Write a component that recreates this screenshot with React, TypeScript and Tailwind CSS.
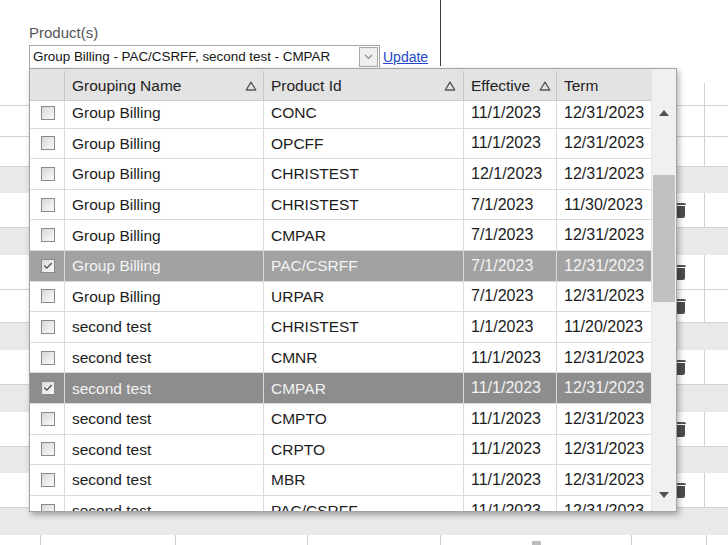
import { Check } from 'lucide-react';

type Row = {
  group: string;
  product: string;
  effective: string;
  term: string;
  checked?: boolean;
  tone?: 'selected' | 'hover';
};

const rows: Row[] = [
  { group: 'Group Billing', product: 'CONC', effective: '11/1/2023', term: '12/31/2023' },
  { group: 'Group Billing', product: 'OPCFF', effective: '11/1/2023', term: '12/31/2023' },
  { group: 'Group Billing', product: 'CHRISTEST', effective: '12/1/2023', term: '12/31/2023' },
  { group: 'Group Billing', product: 'CHRISTEST', effective: '7/1/2023', term: '11/30/2023' },
  { group: 'Group Billing', product: 'CMPAR', effective: '7/1/2023', term: '12/31/2023' },
  { group: 'Group Billing', product: 'PAC/CSRFF', effective: '7/1/2023', term: '12/31/2023', checked: true, tone: 'selected' },
  { group: 'Group Billing', product: 'URPAR', effective: '7/1/2023', term: '12/31/2023' },
  { group: 'second test', product: 'CHRISTEST', effective: '1/1/2023', term: '11/20/2023' },
  { group: 'second test', product: 'CMNR', effective: '11/1/2023', term: '12/31/2023' },
  { group: 'second test', product: 'CMPAR', effective: '11/1/2023', term: '12/31/2023', checked: true, tone: 'hover' },
  { group: 'second test', product: 'CMPTO', effective: '11/1/2023', term: '12/31/2023' },
  { group: 'second test', product: 'CRPTO', effective: '11/1/2023', term: '12/31/2023' },
  { group: 'second test', product: 'MBR', effective: '11/1/2023', term: '12/31/2023' },
  { group: 'second test', product: 'PAC/CSRFF', effective: '11/1/2023', term: '12/31/2023' },
];

// background grid rows behind the popup
const bgRows: { h: string; gray?: boolean; icon?: boolean }[] = [
  { h: 'h-[23px]' },
  { h: 'h-[31px]' },
  { h: 'h-[30px]' },
  { h: 'h-[26px]', gray: true },
  { h: 'h-[35px]', icon: true },
  { h: 'h-[27px]', gray: true },
  { h: 'h-[35px]', icon: true },
  { h: 'h-[33px]', icon: true },
  { h: 'h-[27px]', gray: true },
  { h: 'h-[35px]', icon: true },
  { h: 'h-[27px]', gray: true },
  { h: 'h-[35px]', icon: true },
  { h: 'h-[26px]', gray: true },
  { h: 'h-[35px]', icon: true },
  { h: 'h-[27px]', gray: true },
];

function SortIcon() {
  return (
    <svg width="12" height="10" viewBox="0 0 12 10">
      <path d="M6 1.2 L10.8 9 H1.2 Z" fill="none" stroke="#5a5a5a" strokeWidth="1.4" strokeLinejoin="round" />
    </svg>
  );
}

function CheckBox({ checked }: { checked?: boolean }) {
  return (
    <span className="flex h-[14px] w-[14px] items-center justify-center border border-[#8a8a8a] bg-linear-to-br from-[#d8d8d8] to-[#fbfbfb]">
      {checked && <Check className="h-[10px] w-[10px] text-[#4a4a4a]" strokeWidth={3} />}
    </span>
  );
}

function TrashStub() {
  return (
    <div className="flex flex-col items-center">
      <div className="h-[2px] w-[13px] rounded-t-sm bg-[#555]" />
      <div className="mt-[1px] h-[12px] w-[11px] rounded-b-[2px] bg-[#4d4d4d]" />
    </div>
  );
}

export default function App() {
  return (
    <div className="relative h-[545px] w-[728px] overflow-hidden bg-white font-['Liberation_Sans',Arial,sans-serif]">
      {/* form header */}
      <div className="flex h-[83px]">
        <div className="h-[66px] w-[441px] border-r-[1.5px] border-[#3c3c3c] pl-[29px] pt-[24px]">
          <div className="text-[15px] leading-[18px] text-[#555]">Product(s)</div>
          <div className="mt-[3px] flex items-center">
            <div className="flex h-[24px] w-[351px] items-center border border-[#a6a6a6] bg-white pl-[3px]">
              <span className="flex-1 truncate pt-[1px] text-[13.4px] text-[#141414]">
                Group Billing - PAC/CSRFF, second test - CMPAR
              </span>
              <span className="mr-[1px] flex h-[20px] w-[19px] items-center justify-center border border-[#a8a8a8] bg-[#efefef]">
                <svg width="9" height="6" viewBox="0 0 9 6">
                  <path d="M1 1 L4.5 4.5 L8 1" fill="none" stroke="#8a8a8a" strokeWidth="1.2" />
                </svg>
              </span>
            </div>
            <a className="ml-[3px] pt-[1px] text-[14px] text-[#2447c9] underline">Update</a>
          </div>
        </div>
      </div>

      {/* background grid */}
      <div className="w-[440px] border-t-2 border-[#555]" />
      <div className="-mt-[2px]">
        {bgRows.map((r, i) => (
          <div
            key={i}
            className={`flex ${r.h} items-center border-b ${
              r.gray ? 'border-[#e9e9e9] bg-[#e9e9e9]' : 'border-[#d2d2d2] bg-white'
            }`}
          >
            <div className="w-[672px]" />
            <div className="flex w-[14px] justify-center">{r.icon && <TrashStub />}</div>
            <div className="w-[18px]" />
            {!r.gray && <div className="h-full border-l border-[#d2d2d2]" />}
          </div>
        ))}
        <div className="flex h-[12px]">
          <div className="w-[41px] border-r border-[#cfcfcf]" />
          <div className="w-[135px] border-r border-[#cfcfcf]" />
          <div className="w-[132px] border-r border-[#cfcfcf]" />
          <div className="w-[133px] border-r border-[#cfcfcf]" />
          <div className="flex w-[191px] justify-center border-r border-[#cfcfcf]">
            <div className="mt-[6px] h-[6px] w-[9px] bg-[#bdbdbd]" />
          </div>
          <div className="w-[75px] border-r border-[#cfcfcf]" />
        </div>
      </div>

      {/* dropdown popup */}
      <div className="absolute left-[29px] top-[68px] flex h-[444px] w-[648px] border border-[#a3a3a3] bg-white shadow-[2px_3px_6px_rgba(0,0,0,0.3)]">
        <div className="flex w-[621px] flex-col">
          <div className="flex h-[32px] shrink-0 border-b border-[#cdcdcd] bg-[#e3e3e3] pt-[2px] text-[15.5px] text-[#222]">
            <div className="w-[35px] border-r border-[#c6c6c6]" />
            <div className="flex w-[199px] items-center justify-between border-r border-[#c6c6c6] pl-[7px] pr-[6px]">
              <span>Grouping Name</span>
              <SortIcon />
            </div>
            <div className="flex w-[200px] items-center justify-between border-r border-[#c6c6c6] pl-[7px] pr-[7px]">
              <span>Product Id</span>
              <SortIcon />
            </div>
            <div className="flex w-[93px] items-center justify-between border-r border-[#c6c6c6] pl-[7px] pr-[5px]">
              <span>Effective</span>
              <SortIcon />
            </div>
            <div className="flex w-[94px] items-center pl-[7px]">
              <span>Term</span>
            </div>
          </div>
          <div className="flex-1 overflow-hidden">
            <div className="-mt-[3px]">
              {rows.map((r, i) => {
                const bg =
                  r.tone === 'selected'
                    ? 'bg-[#a2a2a2] text-[#f4f4f4]'
                    : r.tone === 'hover'
                      ? 'bg-[#8d8d8d] text-[#f2f2f2]'
                      : 'bg-white text-[#1c1c1c]';
                return (
                  <div key={i} className={`flex h-[30.6px] border-b border-[#dadada] text-[15.5px] ${bg}`}>
                    <div className="flex w-[35px] items-center justify-center border-r border-[#dadada] pl-[1px]">
                      <CheckBox checked={r.checked} />
                    </div>
                    <div className="flex w-[199px] items-center border-r border-[#dadada] pl-[7px]">{r.group}</div>
                    <div className="flex w-[200px] items-center border-r border-[#dadada] pl-[7px]">{r.product}</div>
                    <div className="flex w-[93px] items-center border-r border-[#dadada] pl-[7px] text-[16px]">
                      {r.effective}
                    </div>
                    <div className="flex w-[94px] items-center pl-[7px] text-[16px]">{r.term}</div>
                  </div>
                );
              })}
            </div>
          </div>
        </div>

        {/* scrollbar */}
        <div className="flex w-[25px] flex-col border-l border-[#e6e6e6] bg-[#f0f0f0]">
          <div className="h-[32px]" />
          <div className="flex h-[24px] items-center justify-center">
            <svg width="10" height="6" viewBox="0 0 10 6">
              <path d="M5 0 L10 6 H0 Z" fill="#505050" />
            </svg>
          </div>
          <div className="mt-[50px] flex justify-center">
            <div className="h-[127px] w-[22px] bg-[#c1c1c1]" />
          </div>
          <div className="flex-1" />
          <div className="flex h-[30px] items-center justify-center pb-[2px]">
            <svg width="10" height="6" viewBox="0 0 10 6">
              <path d="M0 0 H10 L5 6 Z" fill="#505050" />
            </svg>
          </div>
        </div>
      </div>
    </div>
  );
}
